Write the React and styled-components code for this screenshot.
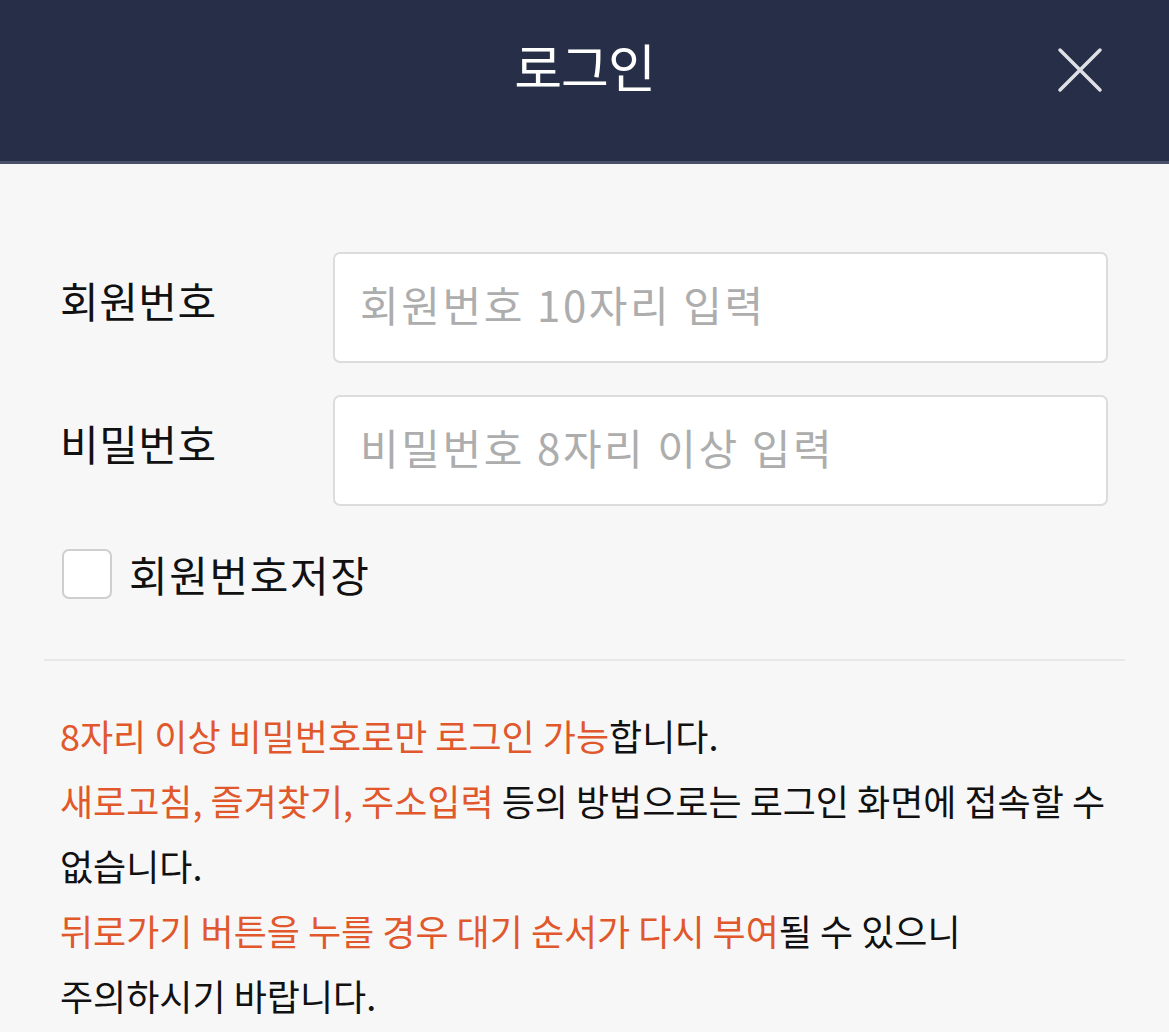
import React from "react";
import styled, { createGlobalStyle } from "styled-components";

const Global = createGlobalStyle`
  html, body { margin: 0; padding: 0; background: #f7f7f7; }
  body { font-family: "Noto Sans CJK KR", "Noto Sans", sans-serif; color: #111; }
  * { box-sizing: border-box; }
`;

const Page = styled.div`
  width: 1169px;
  min-height: 1032px;
  background: #f7f7f7;
`;

const Header = styled.header`
  height: 164px;
  background: #262e48;
  border-bottom: 3px solid #4a5068;
  display: flex;
  align-items: center;
  justify-content: center;
  position: relative;
  padding-bottom: 30px;
`;

const Title = styled.h1`
  margin: 0;
  font-size: 52px;
  font-weight: 400;
  color: #fff;
  letter-spacing: -1px;
`;

const Close = styled.button`
  position: absolute;
  right: 65px;
  top: 46px;
  width: 48px;
  height: 48px;
  padding: 0;
  border: 0;
  background: transparent;
  display: flex;
  align-items: center;
  justify-content: center;
`;

const Body = styled.main`
  padding: 88px 44px 0 44px;
`;

const Form = styled.div`
  padding: 0 17px 0 16px;
  display: flex;
  flex-direction: column;
  gap: 32px;
`;

const Row = styled.div`
  display: grid;
  grid-template-columns: 273px 1fr;
  align-items: center;
`;

const Label = styled.label`
  font-size: 42px;
  letter-spacing: 0.5px;
  color: #111;
  align-self: start;
  padding-top: 17px;
`;

const Input = styled.input`
  height: 111px;
  width: 100%;
  border: 2px solid #dcdcdc;
  border-radius: 7px;
  background: #fff;
  padding: 0 25px 8px 25px;
  font-family: inherit;
  font-size: 42px;
  letter-spacing: 2.6px;
  color: #111;
  outline: none;
  &::placeholder { color: #adadad; }
`;

const CheckRow = styled.label`
  display: flex;
  align-items: center;
  gap: 17px;
  margin-top: 5px;
  margin-left: 2px;
  font-size: 42px;
  letter-spacing: 1.6px;
  color: #111;
`;

const Box = styled.span`
  width: 50px;
  height: 50px;
  border: 2px solid #cfcfcf;
  border-radius: 7px;
  background: #fff;
  flex: none;
`;

const Divider = styled.hr`
  margin: 55px 0 0 0;
  border: 0;
  border-top: 2px solid #e8e8e8;
`;

const Notice = styled.p`
  margin: 0;
  padding: 42px 16px 0 16px;
  font-size: 36px;
  line-height: 65px;
  letter-spacing: 0;
  color: #111;
`;

const Hl = styled.span`
  color: #e0582b;
`;

export default function App() {
  return (
    <>
      <Global />
      <Page>
        <Header>
          <Title>로그인</Title>
          <Close aria-label="닫기">
            <svg width="46" height="46" viewBox="0 0 46 46">
              <path d="M3 3 L43 43 M43 3 L3 43" stroke="#dfe1e6" strokeWidth="3.5" strokeLinecap="round" />
            </svg>
          </Close>
        </Header>
        <Body>
          <Form>
            <Row>
              <Label>회원번호</Label>
              <Input placeholder="회원번호 10자리 입력" />
            </Row>
            <Row>
              <Label>비밀번호</Label>
              <Input type="password" placeholder="비밀번호 8자리 이상 입력" />
            </Row>
            <CheckRow>
              <Box />
              회원번호저장
            </CheckRow>
          </Form>
          <Divider />
          <Notice>
            <Hl>8자리 이상 비밀번호로만 로그인 가능</Hl>합니다.
            <br />
            <Hl>새로고침, 즐겨찾기, 주소입력</Hl> 등의 방법으로는 로그인 화면에 접속할 수
            <br />
            없습니다.
            <br />
            <Hl>뒤로가기 버튼을 누를 경우 대기 순서가 다시 부여</Hl>될 수 있으니
            <br />
            주의하시기 바랍니다.
          </Notice>
        </Body>
      </Page>
    </>
  );
}
